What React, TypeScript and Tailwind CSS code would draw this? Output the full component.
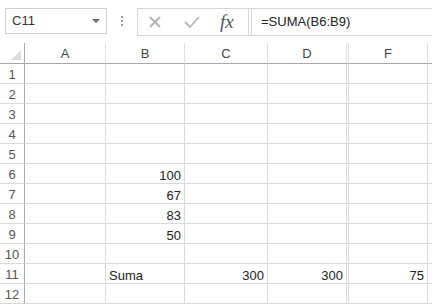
import React from "react";

const rows: Record<number, { B?: string; C?: string; D?: string; F?: string; label?: string }> = {
  6: { B: "100" },
  7: { B: "67" },
  8: { B: "83" },
  9: { B: "50" },
  11: { label: "Suma", C: "300", D: "300", F: "75" },
};

const cell = "border-r border-b border-[#dadada] flex items-end pb-[1px] px-[3px] text-[13px] text-[#222] leading-none h-[20px]";

function NameBox() {
  return (
    <div className="ml-[5px] mt-[8px] flex h-[26px] w-[102px] items-center justify-between border border-[#cfcfcf] bg-white pl-[6px] pr-[6px]">
      <span className="text-[13px] text-[#333]">C11</span>
      <svg width="8" height="5" viewBox="0 0 8 5">
        <path d="M0 0 L8 0 L4 4 Z" fill="#6b6b6b" />
      </svg>
    </div>
  );
}

function FormulaBar() {
  return (
    <div className="mt-[8px] ml-[14px] flex h-[28px] flex-1 items-center border-y border-l border-[#d6d6d6] bg-white">
      <div className="flex h-full w-[110px] items-center">
        <svg className="ml-[10px]" width="14" height="14" viewBox="0 0 14 14">
          <path d="M2 2 L12 12 M12 2 L2 12" stroke="#b3b3b3" strokeWidth="2" fill="none" />
        </svg>
        <svg className="ml-[22px]" width="16" height="14" viewBox="0 0 16 14">
          <path d="M1 7 L6 12 L15 2" stroke="#b3b3b3" strokeWidth="1.8" fill="none" />
        </svg>
        <span className="ml-[20px] font-['Liberation_Serif',serif] text-[19px] italic text-[#555]">fx</span>
      </div>
      <div className="flex h-full w-[4px] border-x border-[#d6d6d6]" />
      <span className="ml-[9px] text-[13px] text-[#222]">=SUMA(B6:B9)</span>
    </div>
  );
}

export default function App() {
  const nums = Array.from({ length: 12 }, (_, i) => i + 1);
  return (
    <div className="h-[305px] w-[432px] overflow-hidden bg-white font-['Liberation_Sans',sans-serif]">
      <div className="flex h-[43px]">
        <NameBox />
        <div className="ml-[14px] mt-[16px] flex flex-col gap-[2px]">
          <span className="block h-[2px] w-[2px] bg-[#9a9a9a]" />
          <span className="block h-[2px] w-[2px] bg-[#9a9a9a]" />
          <span className="block h-[2px] w-[2px] bg-[#9a9a9a]" />
        </div>
        <FormulaBar />
      </div>
      <div className="grid grid-cols-[25px_81px_79px_83px_79px_2px_79px_1fr]">
        <div className="relative h-[21px] border-r border-b border-[#a8a8a8]">
          <svg className="absolute right-[3px] bottom-[3px]" width="10" height="10" viewBox="0 0 10 10">
            <path d="M10 0 L10 10 L0 10 Z" fill="#dcdcdc" />
          </svg>
        </div>
        {["A", "B", "C", "D", "", "F", ""].map((h, i) => (
          <div
            key={i}
            className="flex h-[21px] items-center justify-center border-r border-b border-r-[#e0e0e0] border-b-[#a8a8a8] pt-[2px] text-[13px] text-[#444]"
          >
            {h}
          </div>
        ))}
        {nums.map((n) => {
          const r = rows[n] ?? {};
          return (
            <React.Fragment key={n}>
              <div className="flex h-[20px] items-end justify-center border-r border-b border-r-[#a8a8a8] border-b-[#dadada] pb-[2px] text-[13px] leading-none text-[#555]">
                {n}
              </div>
              <div className={cell} />
              <div className={`${cell} justify-between`}>
                <span>{r.label ?? ""}</span>
                <span>{r.B ?? ""}</span>
              </div>
              <div className={`${cell} justify-end`}>{r.C ?? ""}</div>
              <div className={`${cell} justify-end`}>{r.D ?? ""}</div>
              <div className="h-[20px] border-r border-b border-[#dadada]" />
              <div className={`${cell} justify-end`}>{r.F ?? ""}</div>
              <div className={cell} />
            </React.Fragment>
          );
        })}
      </div>
    </div>
  );
}
